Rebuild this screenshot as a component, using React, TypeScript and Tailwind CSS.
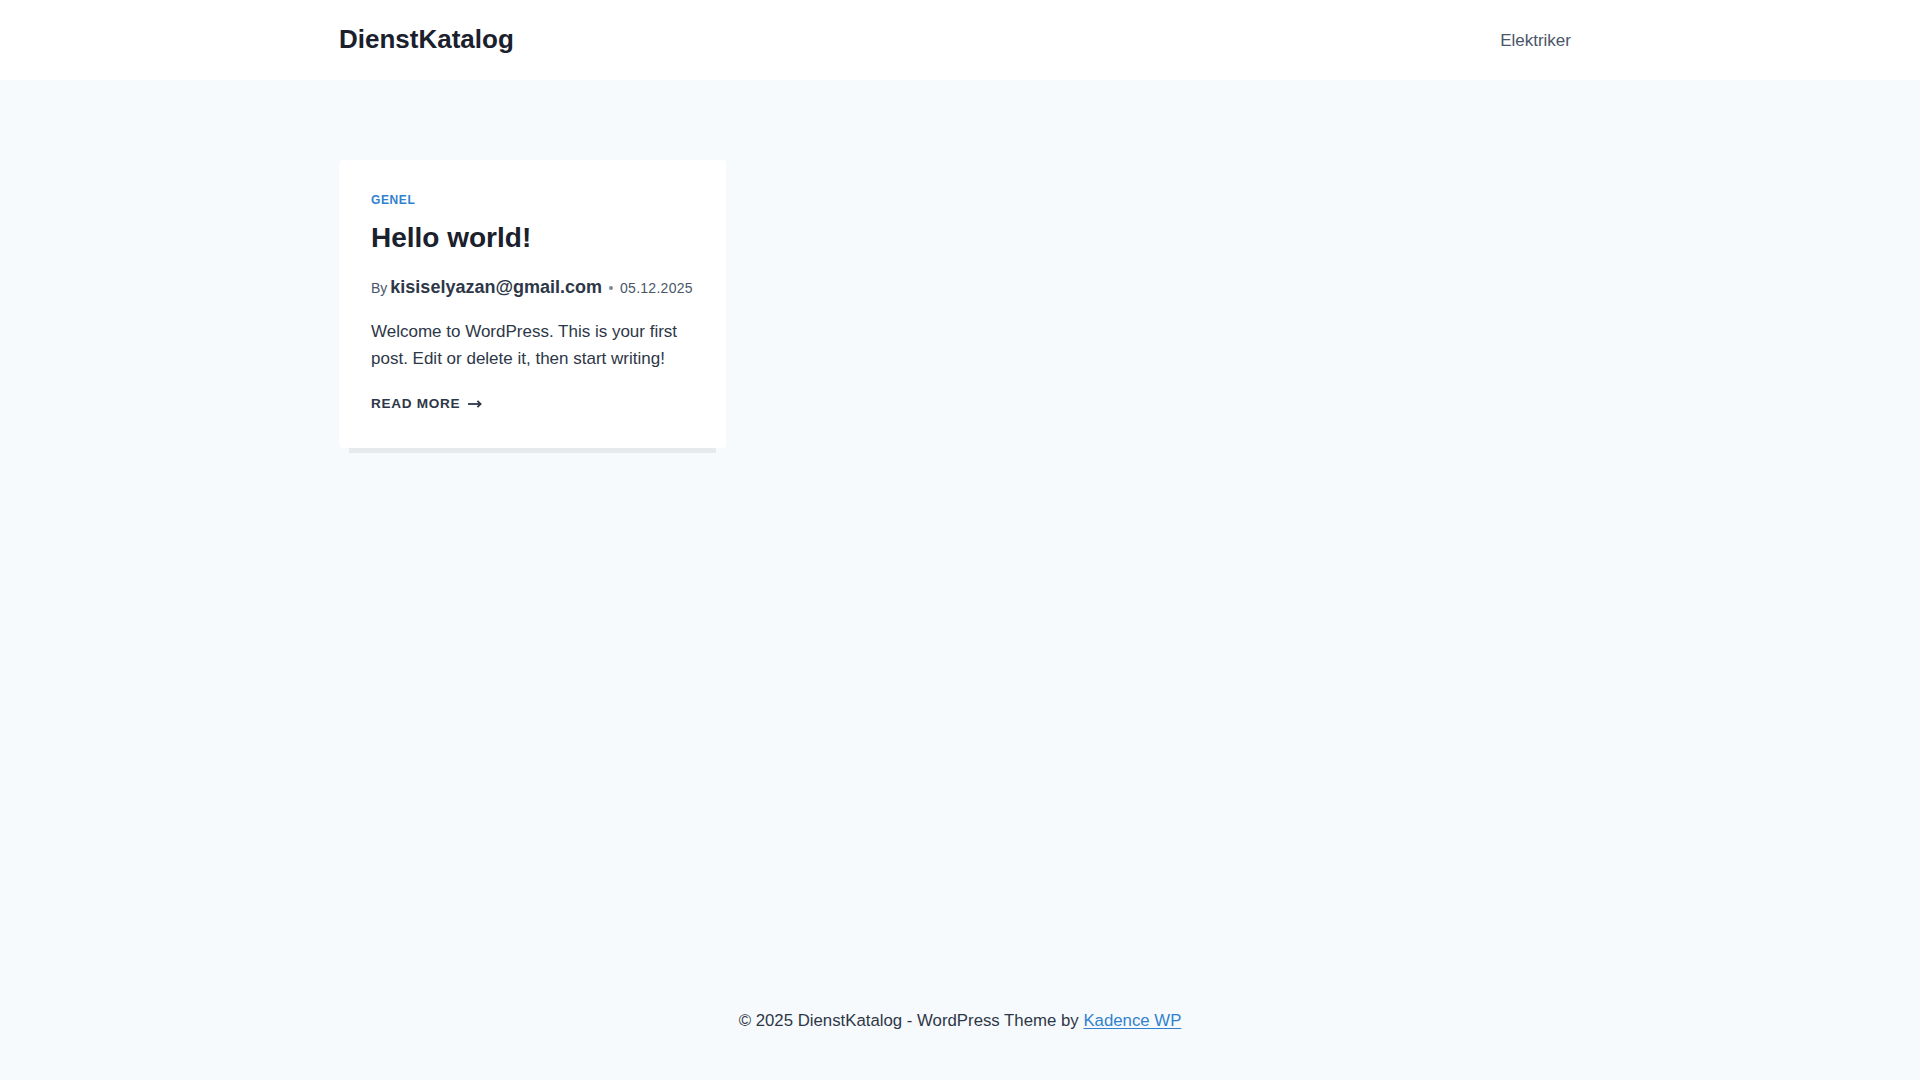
import { ReactNode } from "react";

const font = { fontFamily: '"Liberation Sans", Arial, sans-serif' };

function ArrowRight() {
  return (
    <svg width="14" height="8" viewBox="0 0 14 8" fill="none" className="ml-[8px] shrink-0">
      <path d="M0 4H12.6" stroke="currentColor" strokeWidth="1.8" />
      <path d="M9.4 0.9L12.6 4L9.4 7.1" stroke="currentColor" strokeWidth="1.8" fill="none" />
    </svg>
  );
}

function MetaDot() {
  return <span className="mx-[7px] inline-block w-[4px] h-[4px] rounded-full bg-[#4a5568] opacity-70 self-center" />;
}

function PostCard({
  category,
  title,
  author,
  date,
  children,
}: {
  category: string;
  title: string;
  author: string;
  date: string;
  children: ReactNode;
}) {
  return (
    <article className="bg-white rounded-[4px] p-[32px] shadow-[0px_15px_0px_-10px_#e7eaed]">
      {/* Taxonomies */}
      <div className="text-[12px] leading-[17px] font-bold uppercase tracking-[0.05em] text-[#3182ce]">
        {category}
      </div>
      <h2 className="mt-[8px] text-[28px] leading-[42px] font-bold text-[#1a202c]">{title}</h2>
      {/* Meta */}
      <div className="mt-[15px] flex items-baseline text-[#4a5568]">
        <span className="text-[14px] leading-[27px]">By</span>
        <span className="ml-[3px] text-[18px] leading-[27px] font-bold text-[#2d3748]">{author}</span>
        <MetaDot />
        <span className="text-[14px] leading-[27px] tracking-[0.02em]">{date}</span>
      </div>
      <p className="mt-[16px] text-[17px] leading-[27px] text-[#2d3748]">{children}</p>
      <a className="mt-[20px] flex items-center text-[13.6px] leading-[24px] font-bold uppercase tracking-[0.05em] text-[#2d3748]">
        Read More
        <ArrowRight />
      </a>
    </article>
  );
}

export default function App() {
  return (
    <div className="min-h-screen flex flex-col bg-[#f7fafc]" style={font}>
      {/* Header */}
      <header className="bg-white">
        <div className="max-w-[1290px] mx-auto px-[24px] h-[80px] flex items-center justify-between">
          <a className="text-[26px] leading-[1.2] font-bold text-[#1a202c]">DienstKatalog</a>
          <nav>
            <a className="px-[10px] text-[17px] leading-[27px] text-[#4a5568]">Elektriker</a>
          </nav>
        </div>
      </header>

      {/* Content */}
      <main className="flex-1">
        <div className="max-w-[1290px] mx-auto px-[24px] pt-[80px] grid grid-cols-3 gap-[40px] items-start">
          <PostCard category="Genel" title="Hello world!" author="kisiselyazan@gmail.com" date="05.12.2025">
            Welcome to WordPress. This is your first post. Edit or delete it, then start writing!
          </PostCard>
        </div>
      </main>

      {/* Footer */}
      <footer className="pt-[30px] pb-[46px]">
        <p className="text-center text-[16.8px] leading-[27px] text-[#2d3748]">
          © 2025 DienstKatalog - WordPress Theme by{" "}
          <a className="text-[#3182ce] underline underline-offset-[2px]">Kadence WP</a>
        </p>
      </footer>
    </div>
  );
}
